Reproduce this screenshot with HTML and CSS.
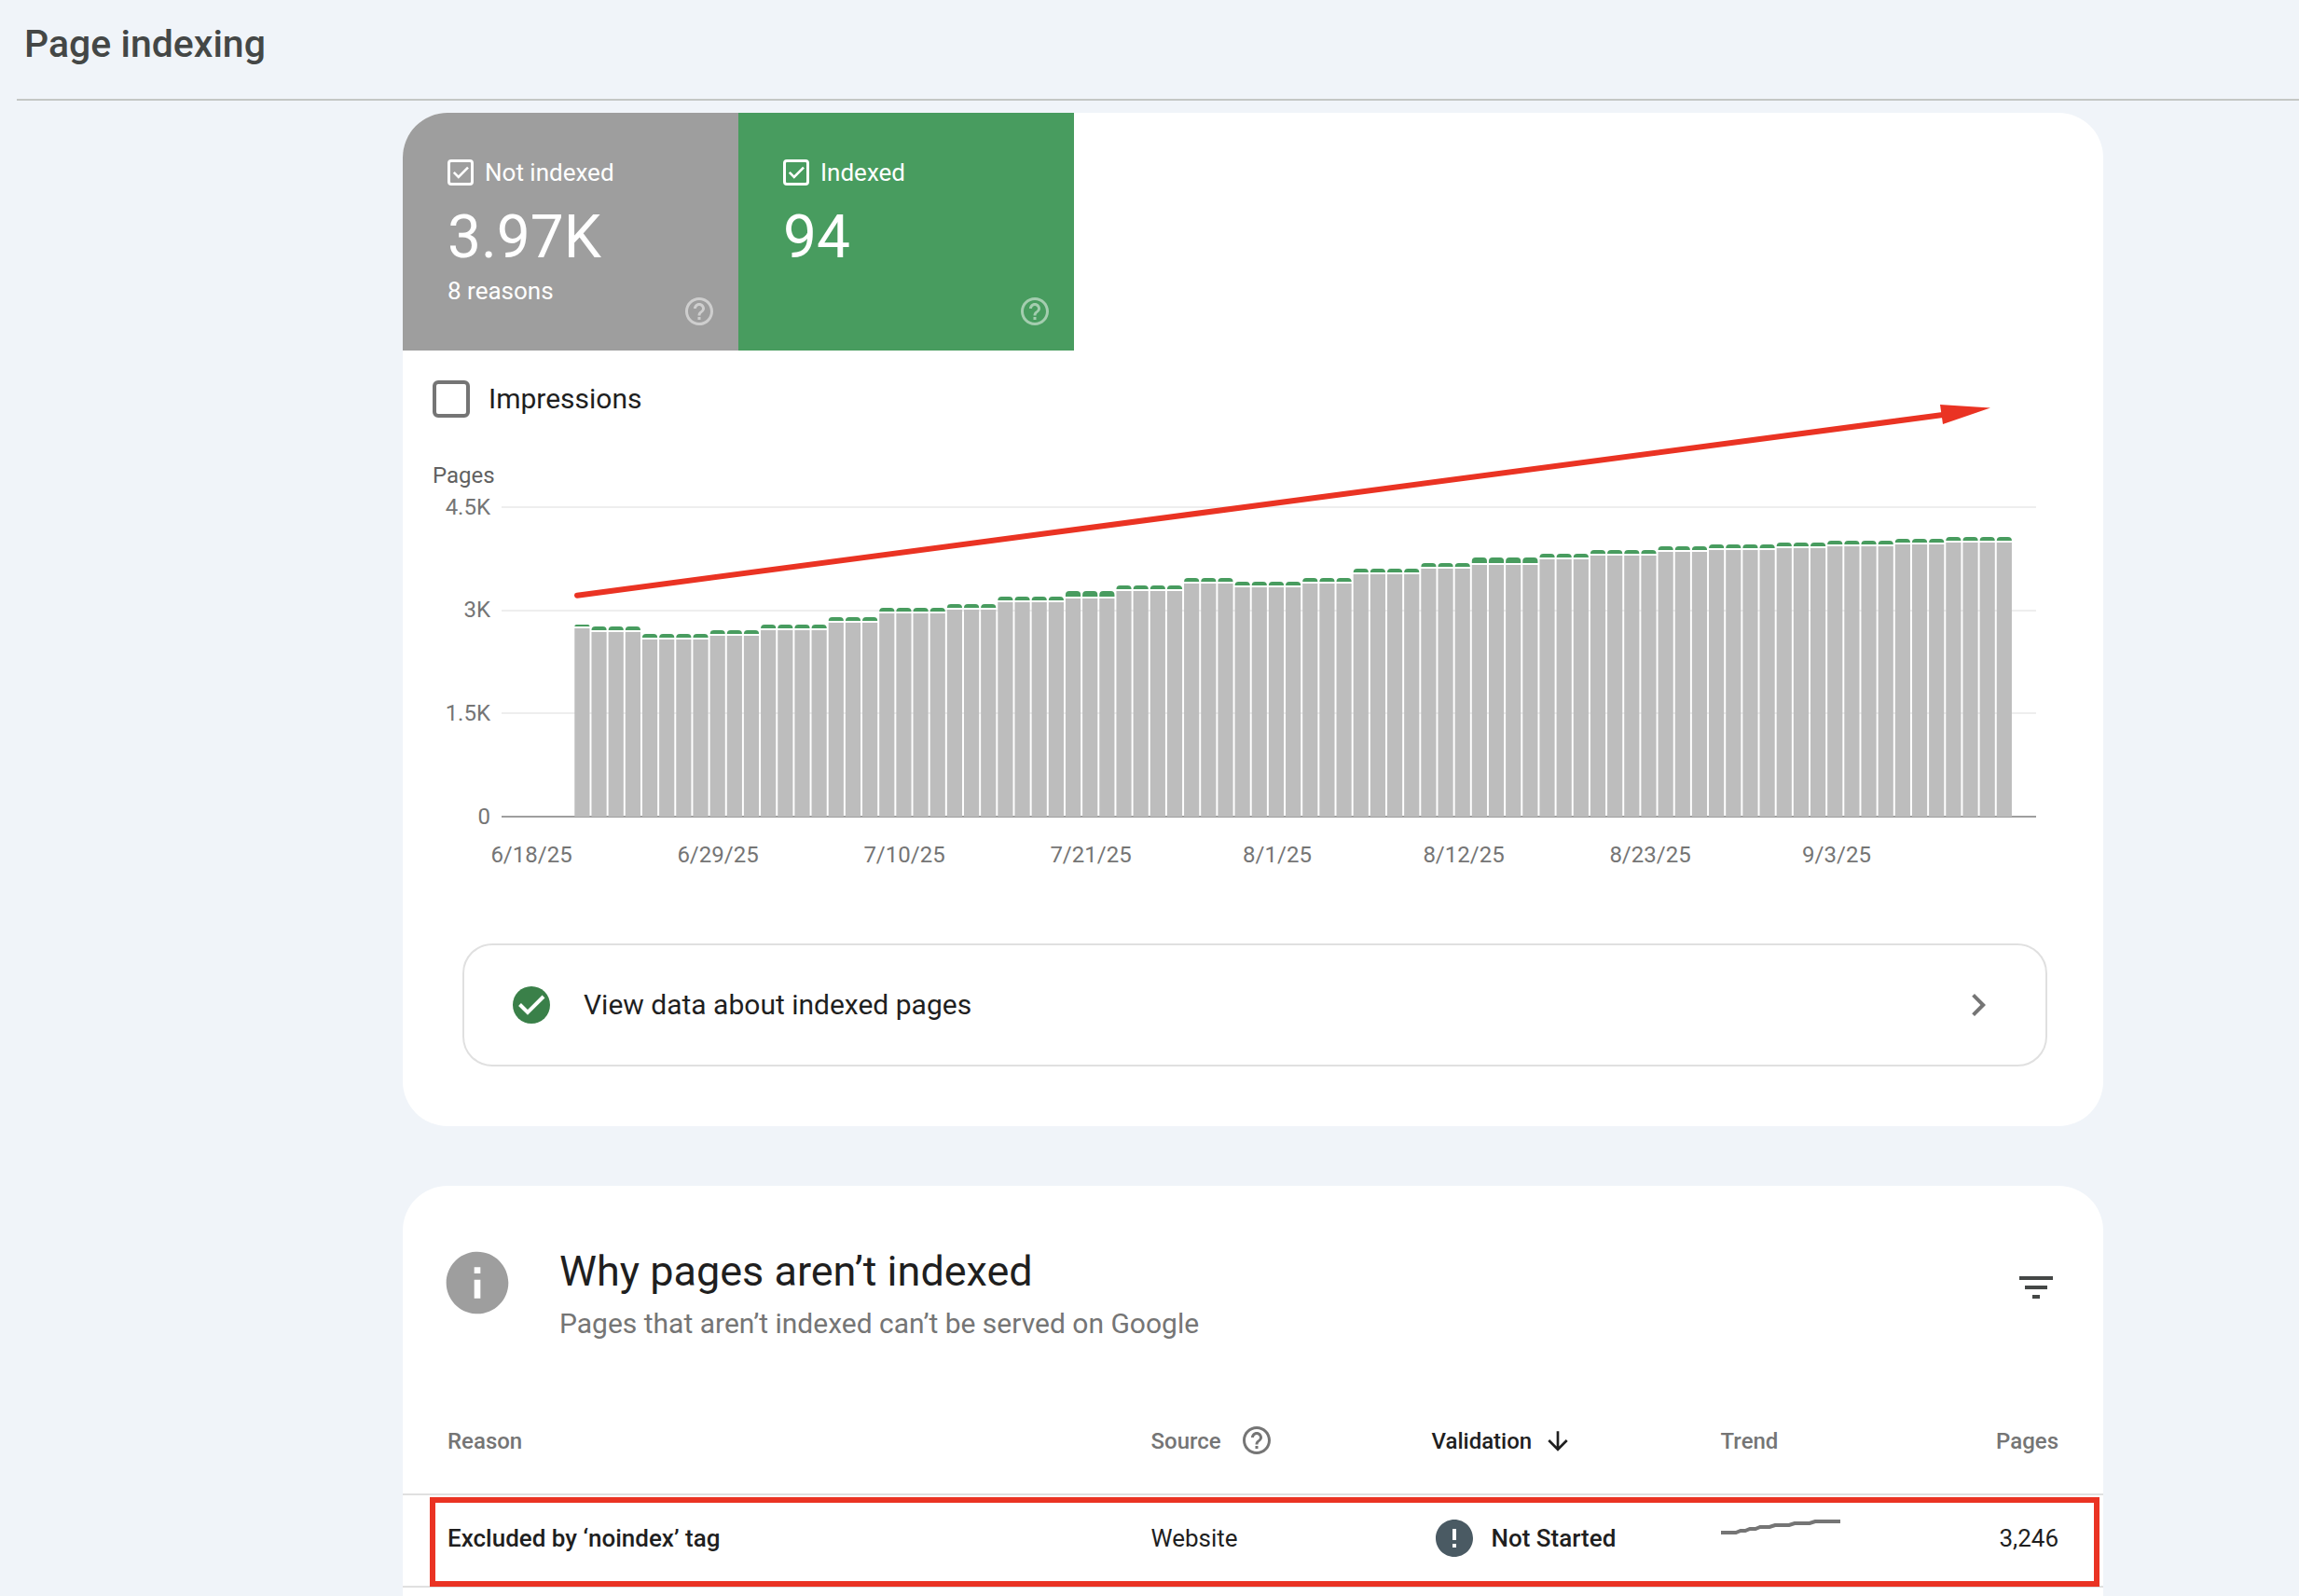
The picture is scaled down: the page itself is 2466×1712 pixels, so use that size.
FILE: index.html
```
<!DOCTYPE html>
<html lang="en">
<head>
<meta charset="utf-8">
<title>Page indexing</title>
<link rel="stylesheet" href="styles.css">
</head>
<body>
<header class="topbar">
  <h1 class="topbar-title">Page indexing</h1>
</header>
<main class="content">
  <section class="card">
    <div class="tiles">
      <div class="tile tile-gray">
        <label class="tile-label">
          <span class="check">
            <input type="checkbox" class="check-input" checked>
            <svg class="check-mark" viewBox="0 0 28 28" aria-hidden="true"><path d="M6.800 13.800l5 5L22 8.600" fill="none" stroke="currentColor" stroke-width="2.600"/></svg>
          </span>
          Not indexed
        </label>
        <div class="tile-value">3.97K</div>
        <div class="tile-foot">
          <span class="tile-note">8 reasons</span>
          <button type="button" class="icon-button" aria-label="Help: not indexed">
            <svg class="icon-help" viewBox="0 0 24 24"><path fill="currentColor" d="M11 18h2v-2h-2v2zm1-16C6.480 2 2 6.480 2 12s4.480 10 10 10 10-4.480 10-10S17.520 2 12 2zm0 18c-4.410 0-8-3.590-8-8s3.590-8 8-8 8 3.590 8 8-3.590 8-8 8zm0-14c-2.210 0-4 1.790-4 4h2c0-1.100.9-2 2-2s2 .9 2 2c0 2-3 1.750-3 5h2c0-2.250 3-2.500 3-5 0-2.210-1.790-4-4-4z"/></svg>
          </button>
        </div>
      </div>
      <div class="tile tile-green">
        <label class="tile-label">
          <span class="check">
            <input type="checkbox" class="check-input" checked>
            <svg class="check-mark" viewBox="0 0 28 28" aria-hidden="true"><path d="M6.800 13.800l5 5L22 8.600" fill="none" stroke="currentColor" stroke-width="2.600"/></svg>
          </span>
          Indexed
        </label>
        <div class="tile-value">94</div>
        <div class="tile-foot">
          <span class="tile-note"></span>
          <button type="button" class="icon-button" aria-label="Help: indexed">
            <svg class="icon-help" viewBox="0 0 24 24"><path fill="currentColor" d="M11 18h2v-2h-2v2zm1-16C6.480 2 2 6.480 2 12s4.480 10 10 10 10-4.480 10-10S17.520 2 12 2zm0 18c-4.410 0-8-3.590-8-8s3.590-8 8-8 8 3.590 8 8-3.590 8-8 8zm0-14c-2.210 0-4 1.790-4 4h2c0-1.100.9-2 2-2s2 .9 2 2c0 2-3 1.750-3 5h2c0-2.250 3-2.500 3-5 0-2.210-1.790-4-4-4z"/></svg>
          </button>
        </div>
      </div>
    </div>

    <label class="impressions">
      <input type="checkbox" class="box-input">
      Impressions
    </label>

    <svg class="chart" viewBox="0 0 1824 480" role="img" aria-label="Pages indexed and not indexed by day">
      <g class="grid-lines">
        <rect x="106" y="63" width="1646" height="2"/>
        <rect x="106" y="174" width="1646" height="2"/>
        <rect x="106" y="284" width="1646" height="2"/>
      </g>
      <rect class="axis-line" x="106" y="395" width="1646" height="2"/>
      <g id="bars"></g>
      <g class="axis-text">
        <text class="axis-name" x="32" y="38">Pages</text>
        <g text-anchor="end">
          <text x="94" y="72">4.5K</text>
          <text x="94" y="182">3K</text>
          <text x="94" y="293">1.5K</text>
          <text x="94" y="404">0</text>
        </g>
        <g text-anchor="middle">
          <text x="138" y="445">6/18/25</text>
          <text x="338" y="445">6/29/25</text>
          <text x="538" y="445">7/10/25</text>
          <text x="738" y="445">7/21/25</text>
          <text x="938" y="445">8/1/25</text>
          <text x="1138" y="445">8/12/25</text>
          <text x="1338" y="445">8/23/25</text>
          <text x="1538" y="445">9/3/25</text>
        </g>
      </g>
      <g class="arrow">
        <path class="arrow-shaft" d="M187 158.700L1652 -35"/>
        <path class="arrow-head" d="M1649 -46L1703 -42.500L1652 -25z"/>
      </g>
    </svg>

    <a class="view-data" href="#indexed">
      <svg class="icon-ok" viewBox="0 0 40 40" aria-hidden="true"><circle cx="20" cy="20" r="20" fill="#3a8049"/><path d="M7.500 19.500l8.500 8.500L33 11" fill="none" stroke="#fff" stroke-width="4"/></svg>
      <span class="view-data-text">View data about indexed pages</span>
      <svg class="icon-48" viewBox="0 0 24 24" aria-hidden="true"><path fill="#757575" d="M10 6L8.590 7.410 13.170 12l-4.580 4.590L10 18l6-6z"/></svg>
    </a>
  </section>

  <section class="card card-last">
    <div class="why">
      <svg class="icon-info" viewBox="0 0 24 24" aria-hidden="true"><path fill="#9e9e9e" d="M12 2C6.480 2 2 6.480 2 12s4.480 10 10 10 10-4.480 10-10S17.520 2 12 2zm1 15h-2v-6h2v6zm0-8h-2V7h2v2z"/></svg>
      <div class="why-text">
        <h2 class="why-title">Why pages aren’t indexed</h2>
        <p class="why-sub">Pages that aren’t indexed can’t be served on Google</p>
      </div>
      <button type="button" class="icon-button filter" aria-label="Filter">
        <svg class="icon-48" viewBox="0 0 24 24"><path fill="currentColor" d="M10 18h4v-2h-4v2zM3 6v2h18V6H3zm3 7h12v-2H6v2z"/></svg>
      </button>
    </div>
    <table class="reasons">
      <colgroup><col class="col-reason"><col class="col-source"><col class="col-validation"><col class="col-trend"><col class="col-pages"></colgroup>
      <thead>
        <tr>
          <th>Reason</th>
          <th>
            <span class="cell source-head">Source
              <button type="button" class="icon-button" aria-label="Help: source">
                <svg class="icon-help" viewBox="0 0 24 24"><path fill="currentColor" d="M11 18h2v-2h-2v2zm1-16C6.480 2 2 6.480 2 12s4.480 10 10 10 10-4.480 10-10S17.520 2 12 2zm0 18c-4.410 0-8-3.590-8-8s3.590-8 8-8 8 3.590 8 8-3.590 8-8 8zm0-14c-2.210 0-4 1.790-4 4h2c0-1.100.9-2 2-2s2 .9 2 2c0 2-3 1.750-3 5h2c0-2.250 3-2.500 3-5 0-2.210-1.790-4-4-4z"/></svg>
              </button>
            </span>
          </th>
          <th class="sorted">
            <span class="cell sort-head">Validation
              <svg class="icon-32" viewBox="0 0 24 24" aria-hidden="true"><path fill="currentColor" d="M20 12l-1.410-1.410L13 16.170V4h-2v12.170l-5.580-5.590L4 12l8 8 8-8z"/></svg>
            </span>
          </th>
          <th>Trend</th>
          <th class="num">Pages</th>
        </tr>
      </thead>
      <tbody>
        <tr class="highlighted">
          <td class="strong">Excluded by ‘noindex’ tag</td>
          <td>Website</td>
          <td class="strong">
            <span class="cell status">
              <svg class="icon-48" viewBox="0 0 24 24" aria-hidden="true"><path fill="#4a5a63" d="M12 2C6.480 2 2 6.480 2 12s4.480 10 10 10 10-4.480 10-10S17.520 2 12 2zm1 15h-2v-2h2v2zm0-4h-2V7h2v6z"/></svg>
              Not Started
            </span>
          </td>
          <td><svg class="spark" viewBox="0 0 128 40" role="img" aria-label="Rising trend"><path d="M0 14H16L21 12H26L31 10H37L42 8H52L58 6H73L79 4H95L101 2H128" fill="none" stroke="#757575" stroke-width="4"/></svg></td>
          <td class="num">3,246</td>
        </tr>
      </tbody>
    </table>
  </section>
</main>
<script src="chart.js"></script>
</body>
</html>
```
FILE: styles.css
```
* {
  box-sizing: border-box;
}

body {
  margin: 0;
  min-height: 100vh;
  display: flex;
  flex-direction: column;
  background: #f0f4f9;
  color: #1f1f1f;
  font-family: Roboto, "Liberation Sans", sans-serif;
  font-size: 26px;
  line-height: 32px;
}

h1, h2, p {
  margin: 0;
}

.topbar {
  margin-left: 18px;
  padding: 23px 8px 35px;
  border-bottom: 2px solid #c4c7c5;
}

.topbar-title {
  font-size: 41px;
  line-height: 48px;
  font-weight: 500;
  color: #444746;
}

.content {
  flex: 1;
  display: flex;
  flex-direction: column;
  gap: 64px;
  padding: 13px 210px 0 432px;
}

.card {
  display: flex;
  flex-direction: column;
  background: #fff;
  border-radius: 48px;
  overflow: hidden;
}

.card-last {
  flex: 1;
  border-radius: 48px 48px 0 0;
}

.tiles {
  display: flex;
}

.tile {
  width: 360px;
  padding: 48px 24px 24px 48px;
  color: #fff;
}

.tile-gray {
  background: #9e9e9e;
}

.tile-green {
  background: #489c5f;
}

.tile-label {
  display: flex;
  align-items: center;
  gap: 12px;
}

.check {
  display: grid;
  width: 28px;
  height: 28px;
}

.check-input {
  grid-area: 1 / 1;
  appearance: none;
  margin: 0;
  border: 3px solid #fff;
  border-radius: 4px;
}

.check-mark {
  grid-area: 1 / 1;
  width: 28px;
  height: 28px;
  pointer-events: none;
}

.tile-value {
  margin: 18px 0 5px;
  font-size: 64px;
  line-height: 72px;
}

.tile-foot {
  display: flex;
  justify-content: space-between;
  height: 56px;
}

.icon-button {
  display: block;
  padding: 0;
  border: 0;
  background: none;
  color: inherit;
  line-height: 0;
}

.tile-foot .icon-button {
  align-self: flex-end;
  opacity: 0.5;
}

.icon-help {
  width: 36px;
  height: 36px;
}

.icon-32 {
  width: 32px;
  height: 32px;
}

.icon-48 {
  width: 48px;
  height: 48px;
}

.impressions {
  display: flex;
  align-items: center;
  gap: 20px;
  padding: 32px;
  font-size: 30px;
  line-height: 40px;
}

.box-input {
  appearance: none;
  width: 40px;
  height: 40px;
  margin: 0;
  border: 4px solid #757575;
  border-radius: 6px;
}

.chart {
  display: block;
  width: 100%;
  overflow: visible;
}

.grid-lines {
  fill: #eee;
}

.axis-line {
  fill: #9e9e9e;
}

.axis-text {
  font-size: 24px;
  fill: #757575;
}

.axis-name {
  fill: #616161;
}

.bar-gray {
  fill: #bdbdbd;
}

.bar-green {
  fill: #489c5f;
}

.arrow-shaft {
  stroke: #ea3323;
  stroke-width: 6px;
  stroke-linecap: round;
}

.arrow-head {
  fill: #ea3323;
}

.view-data {
  display: flex;
  align-items: center;
  margin: 52px 60px 64px 64px;
  padding: 0 48px 0 52px;
  height: 132px;
  border: 2px solid #e0e0e0;
  border-radius: 32px;
  color: inherit;
  text-decoration: none;
  font-size: 30px;
  line-height: 40px;
}

.icon-ok {
  width: 40px;
  height: 40px;
}

.view-data-text {
  flex: 1;
  margin-left: 36px;
}

.why {
  display: flex;
  padding: 64px 48px 0 40px;
}

.icon-info {
  width: 80px;
  height: 80px;
}

.why-text {
  flex: 1;
  margin-left: 48px;
}

.why-title {
  margin-bottom: 8px;
  font-size: 45px;
  line-height: 56px;
  font-weight: 400;
}

.why-sub {
  font-size: 30px;
  line-height: 40px;
  color: #757575;
}

.filter {
  align-self: flex-start;
  margin-top: 21px;
  color: #444746;
}

.reasons {
  width: 100%;
  margin-top: 50px;
  table-layout: fixed;
  border-collapse: separate;
  border-spacing: 0;
}

.col-reason {
  width: 44%;
}

.col-source {
  width: 16.5%;
}

.col-validation {
  width: 17%;
}

.col-trend {
  width: 12%;
}

.reasons th,
.reasons td {
  padding: 0;
  border-bottom: 2px solid #e0e0e0;
  text-align: left;
  white-space: nowrap;
}

.reasons th {
  height: 114px;
  font-size: 24px;
  font-weight: 500;
  color: #757575;
}

.reasons td {
  height: 99px;
  padding-bottom: 6px;
}

.reasons th:first-child,
.reasons td:first-child {
  padding-left: 48px;
}

.reasons .num {
  padding-right: 48px;
  text-align: right;
}

.reasons .sorted {
  color: #1f1f1f;
}

.strong {
  font-weight: 500;
}

.cell {
  display: flex;
  align-items: center;
}

.source-head {
  gap: 20px;
}

.source-head .icon-button {
  padding-bottom: 3px;
}

.sort-head {
  gap: 12px;
}

.status {
  gap: 16px;
}

.spark {
  display: block;
  width: 128px;
  height: 40px;
}

.highlighted {
  position: relative;
}

.highlighted .num::after {
  content: "";
  position: absolute;
  top: 2px;
  right: 4px;
  bottom: 1px;
  left: 29px;
  border: 6px solid #ea3323;
}
```
FILE: chart.js
```
// Runs of equal days: [days, top of the indexed cap, top of the not-indexed bar]
const runs = [
  [1, 190, 194], [3, 192, 198], [4, 200, 206], [3, 196, 202], [4, 190, 196],
  [3, 182, 188], [4, 172, 178], [3, 168, 174], [4, 160, 166], [3, 154, 162],
  [4, 148, 154], [3, 140, 146], [4, 144, 150], [3, 140, 146], [4, 130, 136],
  [3, 124, 130], [4, 118, 126], [3, 114, 120], [4, 110, 116], [3, 106, 112],
  [4, 104, 110], [3, 102, 108], [4, 100, 106], [3, 98, 104], [4, 96, 102]
];
const NS = "http://www.w3.org/2000/svg";
const group = document.getElementById("bars");
const pitch = 18.16;
const width = 16.2;
const base = 396;
let day = 0;

function add(d, className) {
  const path = document.createElementNS(NS, "path");
  path.setAttribute("d", d);
  path.setAttribute("class", className);
  group.appendChild(path);
}

for (const [days, capTop, barTop] of runs) {
  for (let i = 0; i < days; i++, day++) {
    const x = 184.3 + day * pitch;
    const capHeight = barTop - 2 - capTop;
    const r = Math.min(4, capHeight);
    add(`M${x} ${barTop}h${width}V${base}h${-width}z`, "bar-gray");
    add(`M${x} ${barTop - 2}v${r - capHeight}a${r} ${r} 0 0 1 ${r} ${-r}h${width - 2 * r}a${r} ${r} 0 0 1 ${r} ${r}v${capHeight - r}z`, "bar-green");
  }
}
```
